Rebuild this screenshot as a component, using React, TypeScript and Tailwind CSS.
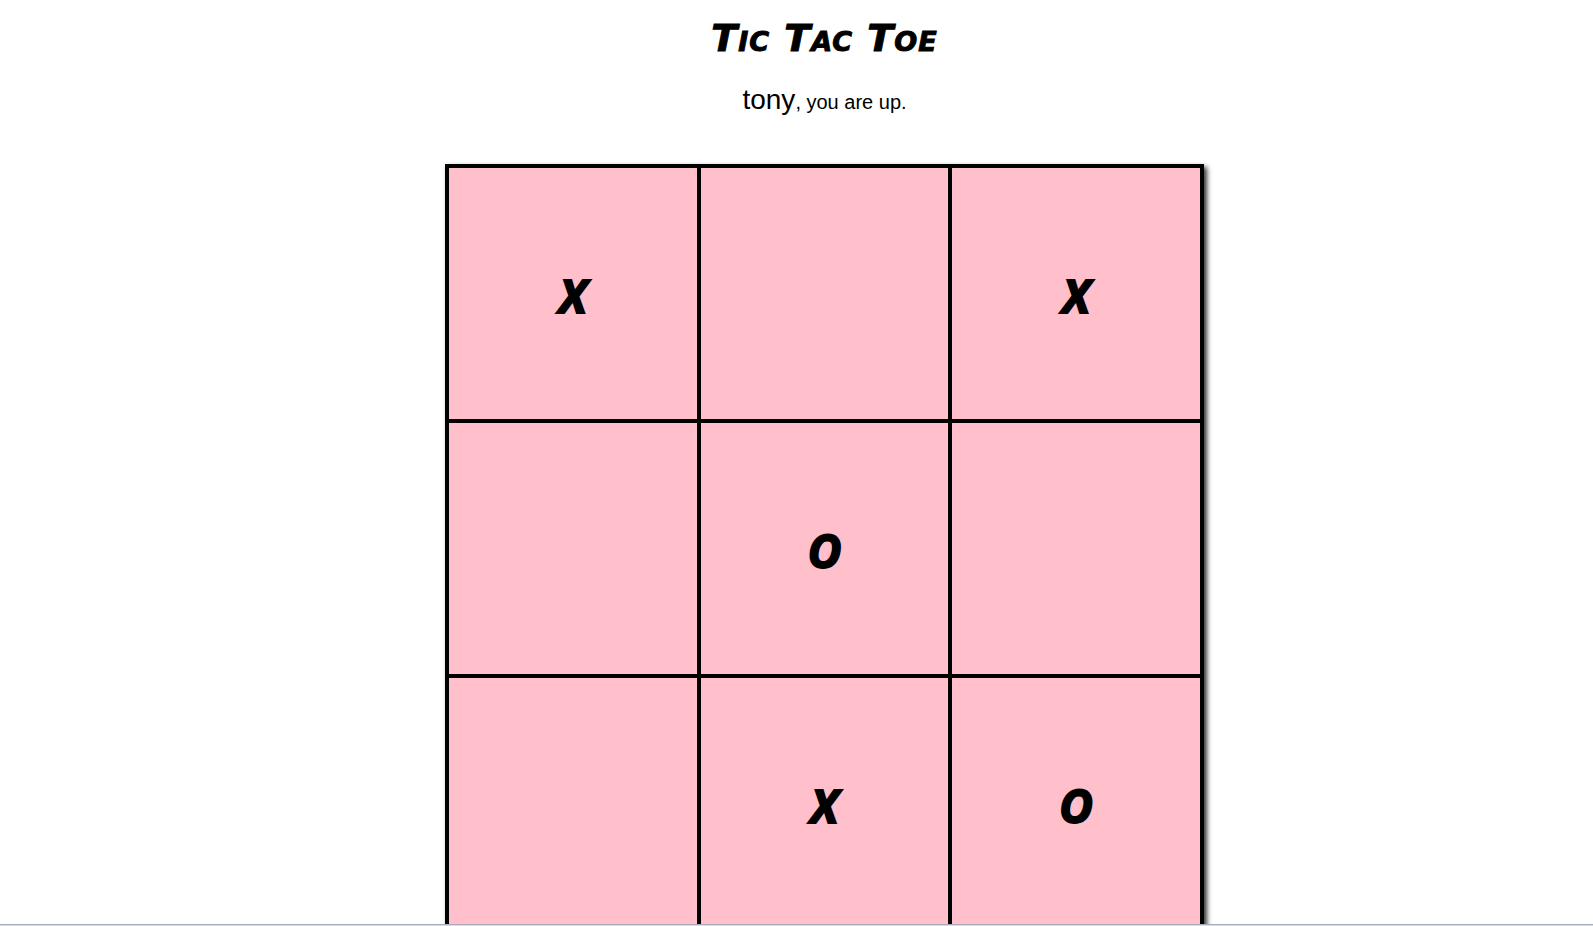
const cells = ["X", "", "X", "", "O", "", "", "X", "O"];

const Cell = ({ mark }: { mark: string }) => (
  <div className="h-[255px] pt-[3px] flex items-center justify-center border-2 border-black bg-[#ffc0cb]">
    <span className="text-[46px] leading-none font-bold italic text-black font-['Open_Sans',sans-serif] [-webkit-text-stroke:2px_black]">
      {mark}
    </span>
  </div>
);

export default function App() {
  return (
    <div className="h-[926px] flex flex-col bg-white font-['Liberation_Sans',sans-serif] text-black">
      <div className="flex-1 overflow-hidden pl-[56px]">
        <div className="flex flex-col items-center">
          <h1 className="mt-[16px] text-[38px] leading-[44px] font-bold italic tracking-[1px] font-['DejaVu_Sans',sans-serif] [font-variant:small-caps] [-webkit-text-stroke:1px_black]">
            Tic Tac Toe
          </h1>
          <p className="mt-[20px] text-[20px] leading-[40px]">
            <span className="text-[28px]">tony</span>, you are up.
          </p>
          <div className="mt-[42px] w-[759px] border-2 border-black shadow-[3px_3px_5px_#333] grid grid-cols-3">
            {cells.map((mark, i) => (
              <Cell key={i} mark={mark} />
            ))}
          </div>
        </div>
      </div>
      <div className="h-px bg-[#a9adba]" />
      <div className="h-px bg-[#d8dbe5]" />
    </div>
  );
}
